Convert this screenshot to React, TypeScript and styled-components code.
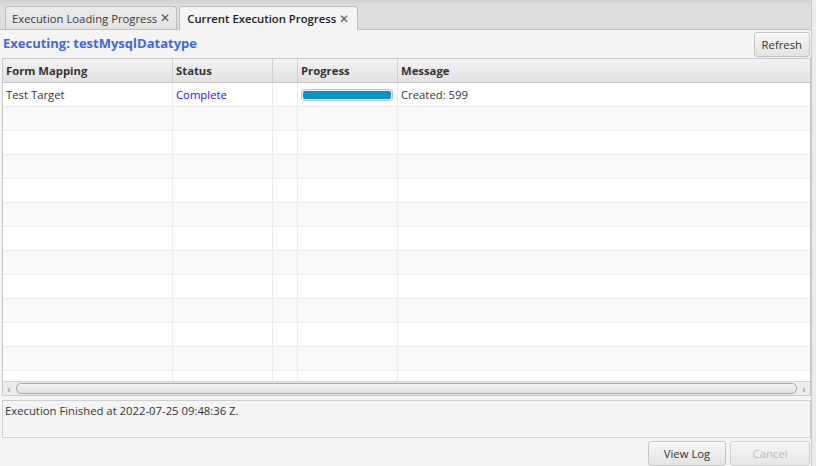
import React from 'react';
import styled, { createGlobalStyle } from 'styled-components';

const GlobalStyle = createGlobalStyle`
    html, body {
        margin: 0;
        padding: 0;
        background: #f4f4f4;
    }
    body {
        font-family: 'Open Sans', 'Noto Sans', sans-serif;
        font-size: 11.3px;
        color: #333;
    }
`;

const Window = styled.div`
    width: 816px;
    height: 466px;
    display: flex;
    overflow: hidden;
    background: #f4f4f4;
`;

const Main = styled.div`
    width: 812px;
    display: flex;
    flex-direction: column;
`;

const EdgeStrip = styled.div`
    width: 4px;
    border-left: 1px solid #c8c8c8;
    background: #ececec;
`;

const TabBar = styled.div`
    height: 30px;
    display: flex;
    align-items: flex-end;
    gap: 2px;
    padding-left: 5px;
    background: linear-gradient(#cfcfcf 0px, #dedede 5px, #dedede 100%);
    border-bottom: 1px solid #c2c2c2;
`;

const Tab = styled.div<{ active?: boolean }>`
    display: flex;
    align-items: center;
    gap: 3px;
    padding: ${p => (p.active ? '0 8px 0 7px' : '0 6px')};
    border: 1px solid #bdbdbd;
    border-bottom: none;
    border-radius: 3px 3px 0 0;
    background: ${p => (p.active ? '#f4f4f4' : 'linear-gradient(#ececec, #e2e2e2)')};
    color: ${p => (p.active ? '#222' : '#3a3a3a')};
    font-weight: ${p => (p.active ? 600 : 400)};
    margin-bottom: ${p => (p.active ? '-1px' : '0')};
    height: ${p => (p.active ? '23px' : '22px')};
    white-space: nowrap;
`;

const CloseMark = styled.span`
    font-weight: 400;
    font-size: 12px;
    color: #555;
    line-height: 1;
`;

const TitleRow = styled.div`
    display: flex;
    justify-content: space-between;
    align-items: center;
    padding: 2px 1px 1px 3px;
    height: 25px;
`;

const RunTitle = styled.div`
    color: #4267e0;
    font-weight: 700;
    font-size: 13px;
    margin-top: -3px;
`;

const Button = styled.button<{ disabled?: boolean }>`
    font-family: inherit;
    font-size: 11.3px;
    height: 25px;
    padding: 0 7px;
    border: 1px solid #c4c4c4;
    border-radius: 3px;
    background: linear-gradient(#f7f7f7, #e3e3e3);
    color: ${p => (p.disabled ? '#a8a8a8' : '#333')};
    box-shadow: inset 0 1px 0 #fff;
    opacity: ${p => (p.disabled ? 0.75 : 1)};
`;

const Table = styled.div`
    margin-left: 2px;
    height: 336px;
    border: 1px solid #c8c8c8;
    display: flex;
    flex-direction: column;
    background: #fff;
`;

const cols = '170px 100px 25px 100px 1fr';

const HeaderRow = styled.div`
    display: grid;
    grid-template-columns: ${cols};
    height: 23px;
    background: linear-gradient(#f3f3f3, #e2e2e2);
    border-bottom: 1px solid #c8c8c8;
`;

const HeadCell = styled.div`
    display: flex;
    align-items: center;
    padding-left: 3px;
    font-weight: 700;
    color: #333;
    border-right: 1px solid #d0d0d0;
    &:last-child {
        border-right: none;
    }
`;

const Body = styled.div`
    flex: 1;
    overflow: hidden;
`;

const Row = styled.div<{ odd?: boolean }>`
    display: grid;
    grid-template-columns: ${cols};
    height: 24px;
    background: ${p => (p.odd ? '#f9f9f9' : '#ffffff')};
    border-bottom: 1px solid #ececec;
    box-sizing: border-box;
`;

const Cell = styled.div<{ tone?: string }>`
    display: flex;
    align-items: center;
    padding-left: 3px;
    color: ${p => p.tone || '#333'};
    border-right: 1px solid #ececec;
    white-space: nowrap;
    &:last-child {
        border-right: none;
    }
`;

const ProgressTrack = styled.div`
    width: 92px;
    height: 12px;
    border: 1px solid #c4c4c4;
    border-radius: 3px;
    background: #f0f0f0;
    padding: 1px;
    box-sizing: border-box;
    display: flex;
`;

const ProgressFill = styled.div`
    height: 100%;
    border-radius: 2px;
    background: #0096c9;
`;

const HScroll = styled.div`
    height: 13px;
    display: flex;
    align-items: center;
    background: #ececec;
    border-top: 1px solid #d4d4d4;
    padding: 0 3px;
    gap: 4px;
`;

const Arrow = styled.span`
    font-size: 11px;
    color: #8a8a8a;
    line-height: 1;
    width: 6px;
    text-align: center;
`;

const Thumb = styled.div`
    flex: 1;
    height: 9px;
    border: 1px solid #a9a9a9;
    border-radius: 5px;
    background: linear-gradient(#f4f4f4, #e0e0e0);
`;

const LogArea = styled.div`
    margin: 4px 0 0 2px;
    height: 39px;
    border: 1px solid #cfcfcf;
    padding: 2px 2px;
    box-sizing: border-box;
    color: #333;
`;

const Footer = styled.div`
    display: flex;
    justify-content: flex-end;
    gap: 4px;
    padding: 3px 1px 0 0;
`;

interface ExecRow {
    mapping: string;
    status: string;
    progress: number;
    message: string;
}

const rows: ExecRow[] = [
    { mapping: 'Test Target', status: 'Complete', progress: 1, message: 'Created: 599' },
];

export default function App() {
    const blanks = Array.from({ length: 12 });
    return (
        <Window>
            <GlobalStyle />
            <Main>
                <TabBar>
                    <Tab>
                        Execution Loading Progress <CloseMark>✕</CloseMark>
                    </Tab>
                    <Tab active>
                        Current Execution Progress <CloseMark>✕</CloseMark>
                    </Tab>
                </TabBar>
                <TitleRow>
                    <RunTitle>Executing: testMysqlDatatype</RunTitle>
                    <Button>Refresh</Button>
                </TitleRow>
                <Table>
                    <HeaderRow>
                        <HeadCell>Form Mapping</HeadCell>
                        <HeadCell>Status</HeadCell>
                        <HeadCell />
                        <HeadCell>Progress</HeadCell>
                        <HeadCell>Message</HeadCell>
                    </HeaderRow>
                    <Body>
                        {rows.map((r, i) => (
                            <Row key={i}>
                                <Cell>{r.mapping}</Cell>
                                <Cell tone="#2a0cff">{r.status}</Cell>
                                <Cell />
                                <Cell>
                                    <ProgressTrack>
                                        <ProgressFill style={{ width: `${r.progress * 100}%` }} />
                                    </ProgressTrack>
                                </Cell>
                                <Cell>{r.message}</Cell>
                            </Row>
                        ))}
                        {blanks.map((_, i) => (
                            <Row key={`b${i}`} odd={(i + rows.length) % 2 === 1}>
                                <Cell />
                                <Cell />
                                <Cell />
                                <Cell />
                                <Cell />
                            </Row>
                        ))}
                    </Body>
                    <HScroll>
                        <Arrow>‹</Arrow>
                        <Thumb />
                        <Arrow>›</Arrow>
                    </HScroll>
                </Table>
                <LogArea>Execution Finished at 2022-07-25 09:48:36 Z.</LogArea>
                <Footer>
                    <Button style={{ width: 78 }}>View Log</Button>
                    <Button style={{ width: 80 }} disabled>
                        Cancel
                    </Button>
                </Footer>
            </Main>
            <EdgeStrip />
        </Window>
    );
}
